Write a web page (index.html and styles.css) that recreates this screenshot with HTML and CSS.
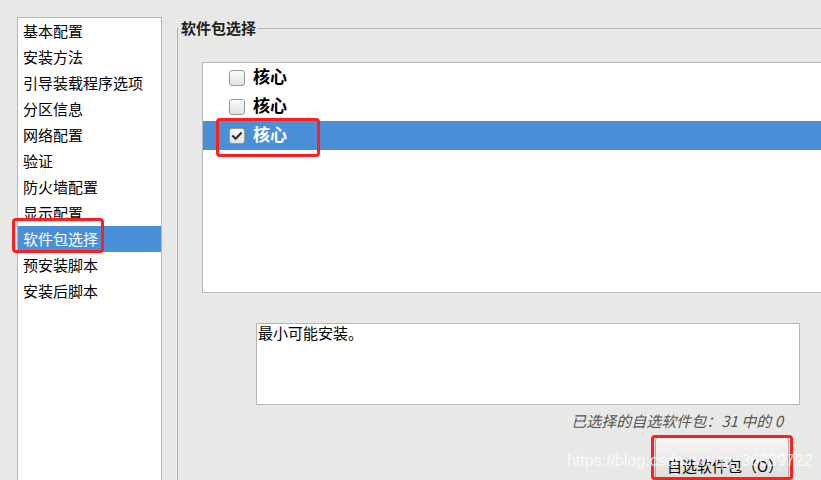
FILE: index.html
```html
<!DOCTYPE html>
<html lang="zh">
<head>
<meta charset="utf-8">
<title>软件包选择</title>
<link rel="stylesheet" href="styles.css">
</head>
<body>
<div class="page">
  <ul class="nav">
    <li class="nav-item">基本配置</li>
    <li class="nav-item">安装方法</li>
    <li class="nav-item">引导装载程序选项</li>
    <li class="nav-item">分区信息</li>
    <li class="nav-item">网络配置</li>
    <li class="nav-item">验证</li>
    <li class="nav-item">防火墙配置</li>
    <li class="nav-item">显示配置</li>
    <li class="nav-item nav-item--active">软件包选择</li>
    <li class="nav-item">预安装脚本</li>
    <li class="nav-item">安装后脚本</li>
  </ul>

  <fieldset class="group">
    <legend class="group-title">软件包选择</legend>
    <div class="pkg-list">
      <div class="pkg-row"><span class="check"></span><span class="pkg-name">核心</span></div>
      <div class="pkg-row"><span class="check"></span><span class="pkg-name">核心</span></div>
      <div class="pkg-row pkg-row--active"><span class="check check--on"><svg viewBox="0 0 16 16" width="16" height="16"><path d="M3.5 8.2 L6.5 11.2 L12.5 4.8" fill="none" stroke="#2e3436" stroke-width="2.4" stroke-linecap="square"/></svg></span><span class="pkg-name">核心</span></div>
    </div>
    <div class="desc">最小可能安装。</div>
    <div class="footer">
      <div class="status">已选择的自选软件包：31 中的 0</div>
      <button class="btn">自选软件包（O）</button>
    </div>
  </fieldset>
</div>

<div class="mark mark--nav"></div>
<div class="mark mark--pkg"></div>
<div class="mark mark--btn"></div>
<div class="watermark">https://blog.csdn.net/qq_36039722</div>
</body>
</html>
```

FILE: styles.css
```css
html, body {
  margin: 0;
  padding: 0;
  overflow: hidden;
  width: 821px;
  height: 480px;
  background: #e8e8e7;
  font-family: "Noto Sans CJK SC", "Noto Sans", sans-serif;
  color: #000;
}

.page {
  display: flex;
  align-items: flex-start;
  height: 480px;
}

.nav {
  list-style: none;
  margin: 17px 0 0 17px;
  padding: 0;
  width: 143px;
  height: 480px;
  flex: none;
  background: #fff;
  border: 1px solid #b6b6b4;
  font-size: 15px;
}

.nav-item {
  height: 26px;
  line-height: 26px;
  padding-left: 5px;
  white-space: nowrap;
}

.nav-item--active {
  background: #4a90d9;
  color: #fff;
}

.group {
  flex: 1;
  min-width: 0;
  margin: 19px 0 0 15px;
  padding: 0;
  border: 1px solid #b6b6b4;
  border-right: 0;
  border-bottom: 0;
}

.group-title {
  font-size: 15px;
  font-weight: bold;
  line-height: 18px;
  padding: 0 2px;
  margin-left: 1px;
  color: #222;
}

.pkg-list {
  margin: 25px 0 0 24px;
  width: 660px;
  height: 229px;
  background: #fff;
  border: 1px solid #b6b6b4;
}

.pkg-row {
  display: flex;
  align-items: center;
  height: 29px;
  padding-left: 26px;
  gap: 8px;
}

.pkg-row--active {
  background: #4a90d9;
  color: #fff;
}

.check {
  width: 14px;
  height: 14px;
  border: 1px solid #9a9a98;
  border-radius: 3px;
  background: linear-gradient(#fbfbfb, #e2e2e1);
  display: flex;
  align-items: center;
  justify-content: center;
  flex: none;
}

.check svg {
  width: 14px;
  height: 14px;
}

.pkg-name {
  font-size: 17px;
  font-weight: bold;
  line-height: 20px;
  padding-bottom: 3px;
}

.desc {
  margin: 30px 0 0 78px;
  width: 540px;
  height: 80px;
  background: #fff;
  border: 1px solid #b6b6b4;
  font-size: 15px;
  line-height: 18px;
  padding: 0 1px;
}

.footer {
  display: flex;
  flex-direction: column;
  align-items: flex-end;
}

.status {
  margin: 7px 38px 0 0;
  font-size: 15px;
  line-height: 18px;
  font-style: italic;
  color: #555753;
}

.btn {
  margin: 7px 32px 0 0;
  width: 134px;
  height: 50px;
  padding: 8px 0 0 11px;
  text-align: left;
  border: 1px solid #a9a9a7;
  border-radius: 3px;
  background: linear-gradient(#f6f6f5, #d9d9d7);
  font-family: "Noto Sans CJK SC", "Noto Sans", sans-serif;
  font-size: 15px;
  line-height: 18px;
  color: #000;
  display: block;
}

.mark {
  position: absolute;
  border: 3px solid #ff1f1f;
  border-radius: 4px;
  box-sizing: border-box;
}

.mark--nav { left: 12px; top: 218px; width: 92px; height: 35px; }
.mark--pkg { left: 216px; top: 118px; width: 104px; height: 39px; }
.mark--btn { left: 651px; top: 435px; width: 142px; height: 45px; }

.watermark {
  position: absolute;
  left: 567px;
  top: 451px;
  font-family: "Liberation Sans", Arial, sans-serif;
  font-size: 16px;
  line-height: 20px;
  color: rgba(255, 255, 255, 0.75);
  white-space: nowrap;
  pointer-events: none;
}
```
